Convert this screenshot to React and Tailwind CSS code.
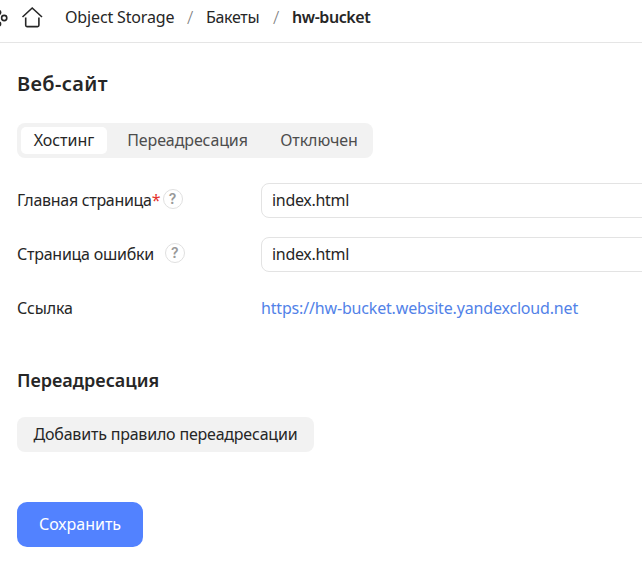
function Hint() {
  return (
    <span className="mb-[1px] flex size-5 shrink-0 items-center justify-center rounded-full border-[1.5px] border-[#e0e0e0] font-['Inter'] text-[14px] leading-none font-semibold text-[#999999]">
      ?
    </span>
  );
}

function Slash() {
  return <span className="w-[8px] shrink-0 text-center text-[18px] font-light text-[#808080]">/</span>;
}

function Header() {
  return (
    <header className="flex h-[43px] items-center border-b border-[#e5e5e5] pb-[8px] text-[#262626]">
      <svg className="h-[35px] w-[60px] shrink-0" viewBox="0 0 60 35" fill="none" stroke="#262626">
        <circle cx="4.2" cy="18" r="2.6" strokeWidth="1.6" />
        <circle cx="-1.2" cy="12.5" r="2.6" fill="#262626" stroke="none" />
        <circle cx="-1.2" cy="24" r="2.6" fill="#262626" stroke="none" />
        <path d="M22.5 17 L32.2 8 L42 17" strokeWidth="1.6" />
        <path d="M25.7 17.5 V25.3 a1.3 1.3 0 0 0 1.3 1.3 H37.6 a1.3 1.3 0 0 0 1.3 -1.3 V17.5" strokeWidth="1.6" />
      </svg>
      <nav className="flex whitespace-nowrap">
        <span className="w-[126px] pl-[5px] tracking-[-0.15px]">Object Storage</span>
        <Slash />
        <span className="w-[78px] pl-[12px] tracking-[-0.3px]">Бакеты</span>
        <Slash />
        <span className="pl-[12px] font-semibold tracking-[-0.42px]">hw-bucket</span>
      </nav>
    </header>
  );
}

export default function App() {
  return (
    <div className="h-[565px] w-[642px] overflow-hidden bg-white font-['Noto_Sans','Open_Sans',sans-serif] text-[16px] leading-[22px] whitespace-nowrap text-[#262626]">
      <Header />
      <main className="pl-[17px]">
        <h1 className="pt-[27px] text-[20px] leading-7 font-semibold tracking-[0.35px]">Веб-сайт</h1>
        <div className="mt-[25px] flex h-[35px] w-[356px] items-center rounded-lg bg-[#f2f2f2] p-1 text-[#4d4d4d]">
          <button className="h-[27px] w-[86px] rounded-[5px] bg-white pb-[2px] text-[#262626]">Хостинг</button>
          <button className="w-[160px] pb-[2px] pl-[1px] tracking-[-0.1px]">Переадресация</button>
          <button className="w-[102px] pb-[2px] pl-[2px] tracking-[-0.1px]">Отключен</button>
        </div>
        <div className="mt-[25px] flex h-[35px] items-center">
          <div className="flex w-[244px] shrink-0 items-center pb-[2px]">
            <span className="tracking-[-0.3px]">Главная страница</span>
            <span className="mr-[2px] text-[#e5322d]">*</span>
            <Hint />
          </div>
          <div className="flex h-[35px] w-[420px] shrink-0 items-center rounded-lg border border-[#e3e3e3] pb-[2px] pl-[10px] tracking-[-0.3px]">index.html</div>
        </div>
        <div className="mt-[19px] flex h-[35px] items-center">
          <div className="flex w-[244px] shrink-0 items-center pb-[2px]">
            <span className="mr-[11px] tracking-[-0.25px]">Страница ошибки</span>
            <Hint />
          </div>
          <div className="flex h-[35px] w-[420px] shrink-0 items-center rounded-lg border border-[#e3e3e3] pb-[2px] pl-[10px] tracking-[-0.3px]">index.html</div>
        </div>
        <div className="mt-[25px] flex">
          <span className="w-[244px] tracking-[-0.15px]">Ссылка</span>
          <a className="tracking-[-0.17px] text-[#5282e8]">https://hw-bucket.website.yandexcloud.net</a>
        </div>
        <h2 className="mt-[49px] text-[18px] leading-6 font-semibold">Переадресация</h2>
        <button className="mt-[25px] block h-[35px] w-[297px] rounded-lg bg-[#f2f2f2] pb-[2px] tracking-[-0.2px]">Добавить правило переадресации</button>
        <button className="mt-[50px] block h-[45px] w-[126px] rounded-[10px] bg-[#5282ff] pb-[2px] text-white">Сохранить</button>
      </main>
    </div>
  );
}
